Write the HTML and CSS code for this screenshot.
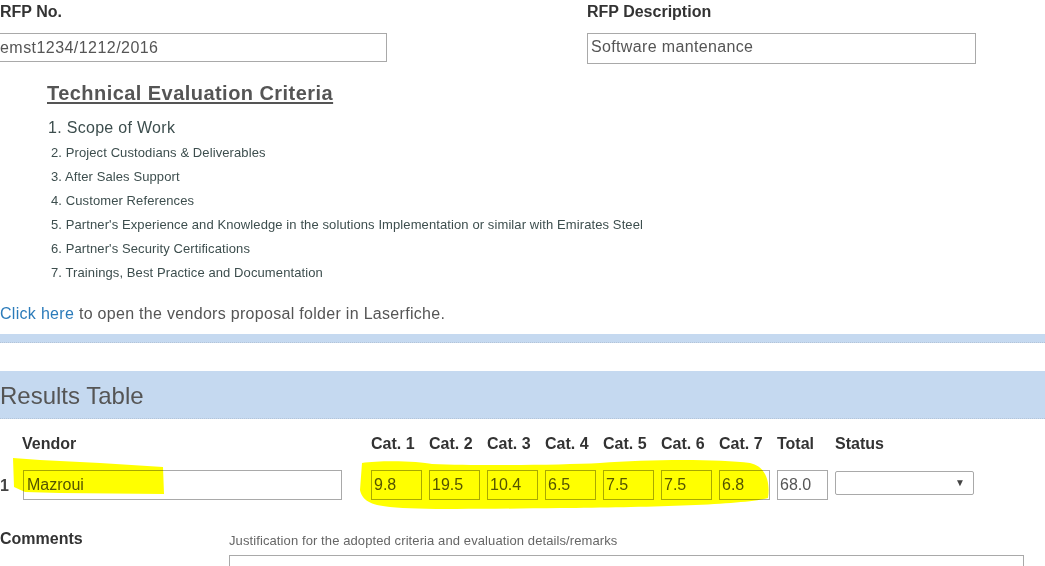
FILE: index.html
```html
<!DOCTYPE html>
<html lang="en">

<head>
    <meta charset="UTF-8">
    <meta name="viewport" content="width=device-width, initial-scale=1.0">
    <title>Technical Evaluation</title>
    <link rel="stylesheet" href="styles.css">
</head>

<body>

    <div class="top-fields">
        <div class="field field-no">
            <label for="rfpNo">RFP No.</label>
            <input type="text" id="rfpNo" class="input-no" value="emst1234/1212/2016">
        </div>
        <div class="field field-desc">
            <label for="rfpDesc">RFP Description</label>
            <input type="text" id="rfpDesc" class="input-desc" value="Software mantenance">
        </div>
    </div>

    <!-- Criteria -->
    <div class="criteria">
        <h2 class="criteria-title">Technical Evaluation Criteria</h2>
        <p class="crit-first">1. Scope of Work</p>
        <p class="crit">2. Project Custodians &amp; Deliverables</p>
        <p class="crit">3. After Sales Support</p>
        <p class="crit">4. Customer References</p>
        <p class="crit">5. Partner's Experience and Knowledge in the solutions Implementation or similar with Emirates Steel</p>
        <p class="crit">6. Partner's Security Certifications</p>
        <p class="crit">7. Trainings, Best Practice and Documentation</p>
    </div>

    <p class="folder-link"><a href="#">Click here</a> to open the vendors proposal folder in Laserfiche.</p>

    <div class="thin-band"></div>

    <div class="section-band">Results Table</div>

    <!-- Results -->
    <div class="results">
        <div class="results-row results-head">
            <span></span>
            <span class="head-vendor">Vendor</span>
            <span>Cat. 1</span>
            <span>Cat. 2</span>
            <span>Cat. 3</span>
            <span>Cat. 4</span>
            <span>Cat. 5</span>
            <span>Cat. 6</span>
            <span>Cat. 7</span>
            <span>Total</span>
            <span>Status</span>
        </div>

        <div class="results-row results-data">
            <span class="row-num">1</span>
            <span><input type="text" class="input-vendor" value="Mazroui"></span>
            <span><input type="text" class="input-cat" value="9.8"></span>
            <span><input type="text" class="input-cat" value="19.5"></span>
            <span><input type="text" class="input-cat" value="10.4"></span>
            <span><input type="text" class="input-cat" value="6.5"></span>
            <span><input type="text" class="input-cat" value="7.5"></span>
            <span><input type="text" class="input-cat" value="7.5"></span>
            <span><input type="text" class="input-cat" value="6.8"></span>
            <span><input type="text" class="input-cat" value="68.0"></span>
            <span class="status-box"><span class="status-arrow">&#9660;</span></span>

            <!-- marker highlight drawn over the row -->
            <svg class="marker" width="800" height="60" viewBox="0 0 800 60">
                <path d="M13,3 L40,5 L100,8 L163,12 L164,39 L60,38 L25,37 L14,32 Z" />
                <path d="M362,8 C380,5 420,6 432,9 C480,11 560,10 600,8 C650,4 720,4 750,8 C768,12 770,30 768,43 C740,50 650,52 560,53 C480,54 420,55 390,52 C370,50 362,45 360,35 Z" />
            </svg>
        </div>
    </div>

    <div class="comments">
        <span class="comments-label">Comments</span>
        <div class="comments-body">
            <span class="comments-hint">Justification for the adopted criteria and evaluation details/remarks</span>
            <textarea class="comments-text"></textarea>
        </div>
    </div>

</body>

</html>
```

FILE: styles.css
```css
body {
    font-family: 'Liberation Sans', Arial, sans-serif;
    margin: 0;
    padding: 0;
    color: #555;
    background-color: #fff;
    overflow: hidden;
}

p {
    margin: 0;
}

.top-fields {
    display: flex;
    padding-top: 2px;
}

.field label {
    display: block;
    font-size: 16px;
    line-height: 20px;
    font-weight: bold;
    color: #333;
    margin-bottom: 11px;
}

.field-no {
    margin-left: -4px;
    width: 391px;
}

.field-no label {
    margin-left: 4px;
}

.field-desc {
    margin-left: 200px;
    width: 389px;
}

input,
textarea {
    font-family: 'Liberation Sans', Arial, sans-serif;
    box-sizing: border-box;
    border: 1px solid #a9a9a9;
    color: #555;
    font-size: 16px;
    padding: 0 3px;
    margin: 0;
    outline: none;
    background: transparent;
}

.input-no {
    width: 391px;
    height: 29px;
    letter-spacing: 0.45px;
}

.input-desc {
    width: 389px;
    height: 31px;
    padding-bottom: 4px;
    letter-spacing: 0.35px;
}

/* Criteria list */
.criteria {
    padding-left: 47px;
    margin-top: 17px;
}

.criteria-title {
    font-size: 20px;
    line-height: 24px;
    margin: 0;
    color: #555;
    letter-spacing: 0.45px;
    text-decoration: underline;
    text-underline-offset: 2px;
}

.crit-first {
    font-size: 16px;
    line-height: 20px;
    color: #3d4e4e;
    letter-spacing: 0.3px;
    margin-top: 13px;
    margin-left: 1px;
}

.crit {
    font-size: 13px;
    line-height: 24px;
    color: #3d4e4e;
    letter-spacing: 0.1px;
    margin-left: 4px;
}

.crit-first + .crit {
    margin-top: 3px;
}

.folder-link {
    font-size: 16px;
    line-height: 20px;
    letter-spacing: 0.3px;
    margin-top: 19px;
}

.folder-link a {
    color: #2b7bba;
    text-decoration: none;
}

.thin-band {
    height: 8px;
    margin-top: 10px;
    background-color: #c5d9f0;
    border-bottom: 1px dotted #b3c4d8;
}

.section-band {
    margin-top: 28px;
    height: 47px;
    line-height: 50px;
    font-size: 24px;
    color: #555;
    background-color: #c5d9f0;
    border-bottom: 1px dotted #b3c4d8;
}

/* Results table */
.results {
    margin-top: 15px;
}

.results-row {
    display: grid;
    grid-template-columns: 22px 349px repeat(8, 58px) 140px;
    align-items: center;
}

.results-head span {
    font-size: 16px;
    line-height: 20px;
    font-weight: bold;
    color: #333;
}

.results-data {
    position: relative;
    margin-top: 16px;
}

.row-num {
    font-size: 16px;
    font-weight: bold;
    color: #444;
    padding-top: 2px;
}

.input-vendor {
    width: 319px;
    height: 30px;
    margin-left: 1px;
}

.input-cat {
    width: 51px;
    height: 30px;
    padding: 0 2px;
}

.status-box {
    display: flex;
    justify-content: flex-end;
    align-items: center;
    box-sizing: border-box;
    width: 139px;
    height: 24px;
    margin-top: -5px;
    border: 1px solid #a9a9a9;
    border-radius: 2px;
    padding-right: 8px;
}

.status-arrow {
    font-size: 10px;
    color: #444;
}

.marker {
    position: absolute;
    left: 0;
    top: -15px;
    pointer-events: none;
    mix-blend-mode: multiply;
}

.marker path {
    fill: #ffff00;
}

/* Comments */
.comments {
    display: flex;
    margin-top: 29px;
}

.comments-label {
    width: 229px;
    font-size: 16px;
    line-height: 20px;
    font-weight: bold;
    color: #333;
}

.comments-body {
    display: flex;
    flex-direction: column;
}

.comments-hint {
    font-size: 13px;
    line-height: 14px;
    letter-spacing: 0.1px;
    color: #666;
    margin-top: 5px;
}

.comments-text {
    width: 795px;
    height: 60px;
    margin-top: 7px;
    resize: none;
}
```
